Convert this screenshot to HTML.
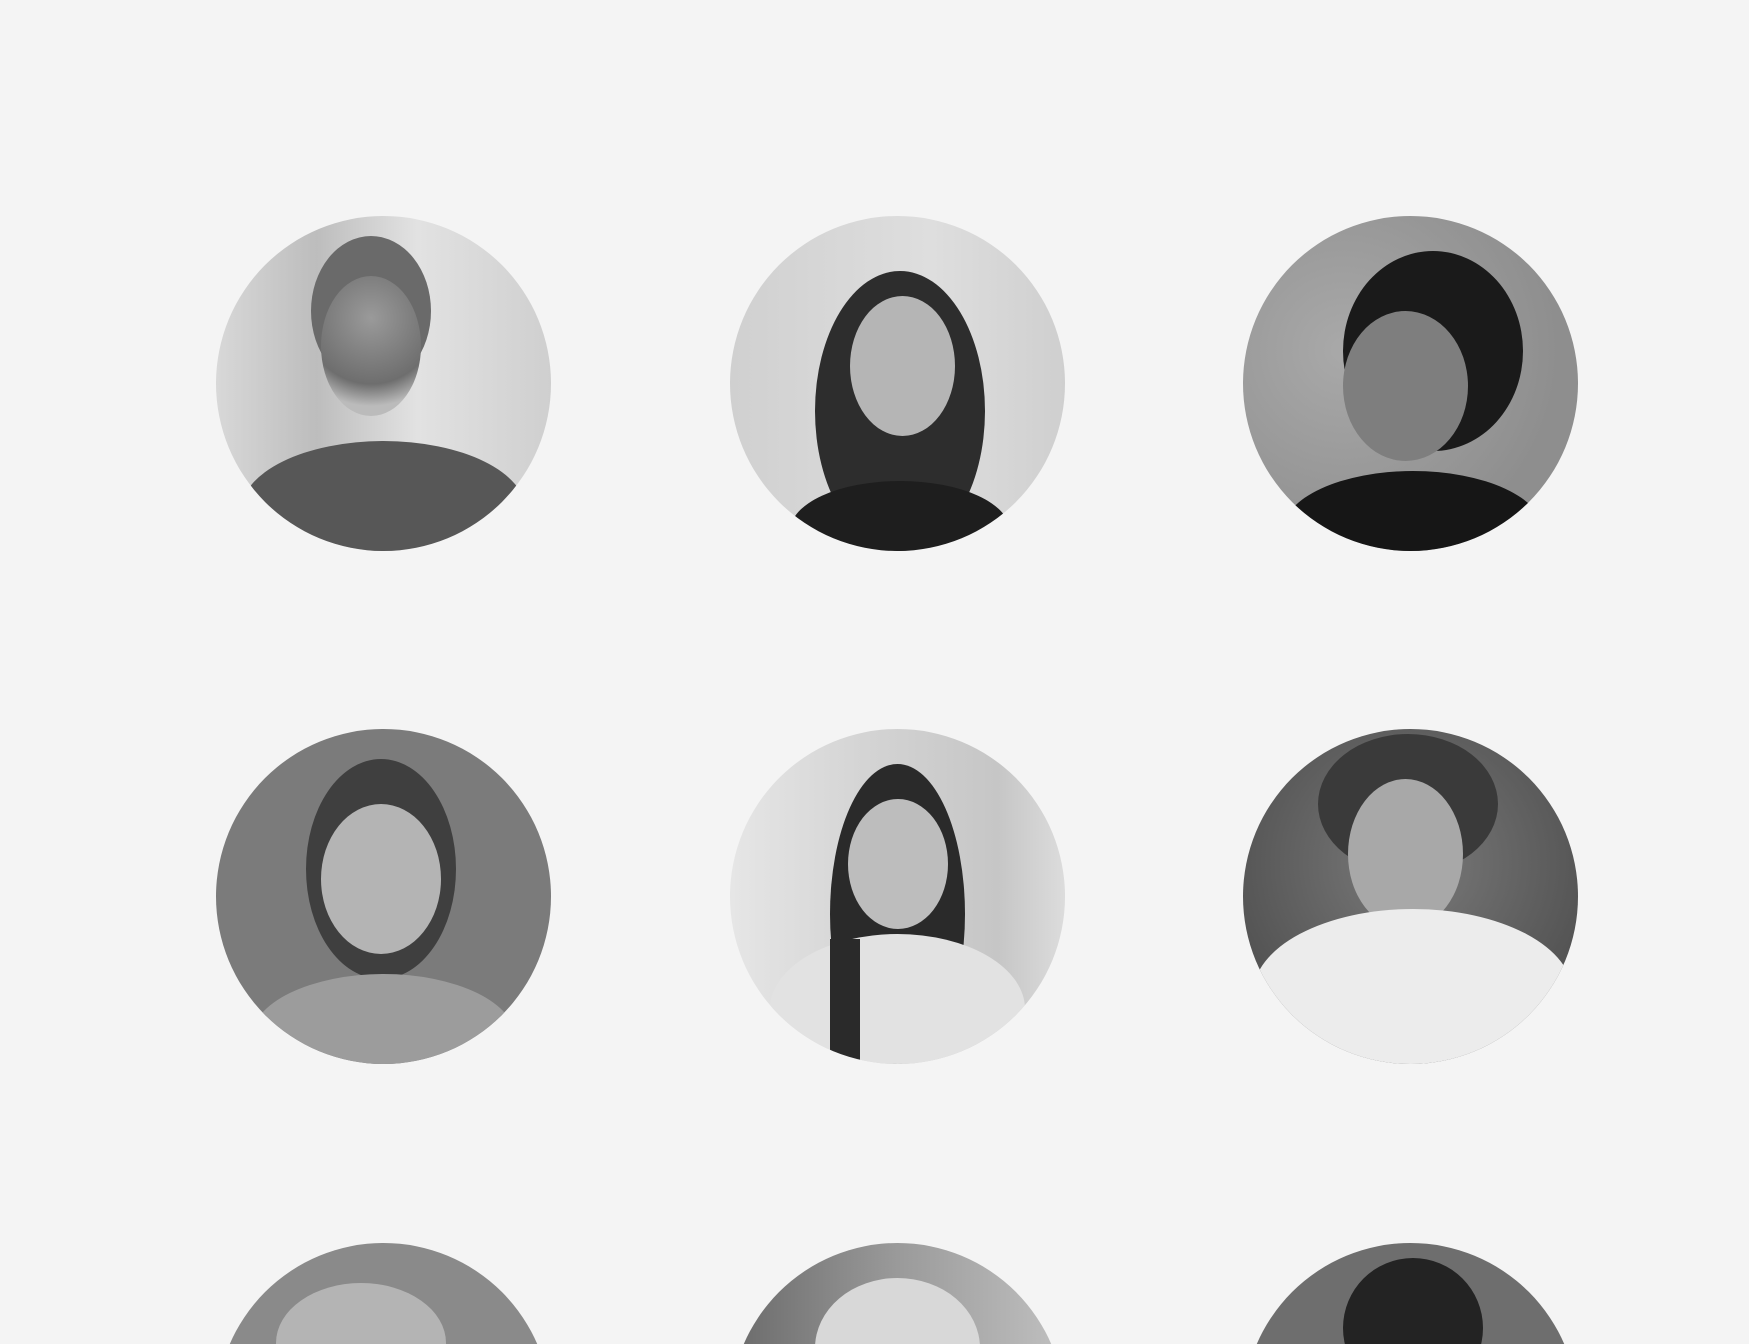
<!DOCTYPE html>
<html><head><meta charset="utf-8"><style>
html,body{margin:0;padding:0;background:#f4f4f4;font-family:"Liberation Sans",sans-serif;width:1749px;height:1344px;overflow:hidden}
#w{position:relative;width:1749px;height:1344px;overflow:hidden;background:#f4f4f4}
.c{position:absolute;width:335px;height:335px;border-radius:50%;overflow:hidden}
.h{position:absolute;border-radius:50%}
.s{position:absolute;border-radius:50% 50% 0 0}
</style></head><body><div id="w">

<div class="c" style="left:216px;top:216px;background:linear-gradient(90deg,#d8d8d8 0%,#bdbdbd 30%,#e2e2e2 60%,#cfcfcf 100%)">
  <div class="h" style="left:95px;top:20px;width:120px;height:150px;background:#6a6a6a"></div>
  <div class="h" style="left:105px;top:60px;width:100px;height:140px;background:radial-gradient(circle at 50% 30%,#9a9a9a,#6e6e6e 60%,#bbb 80%)"></div>
  <div class="s" style="left:25px;top:225px;width:285px;height:140px;background:#575757"></div>
</div>
<div class="c" style="left:730px;top:216px;background:linear-gradient(90deg,#d0d0d0,#dedede 60%,#cfcfcf)">
  <div class="h" style="left:85px;top:55px;width:170px;height:280px;background:#2d2d2d"></div>
  <div class="h" style="left:120px;top:80px;width:105px;height:140px;background:#b5b5b5"></div>
  <div class="s" style="left:60px;top:265px;width:220px;height:100px;background:#1e1e1e"></div>
</div>
<div class="c" style="left:1243px;top:216px;background:radial-gradient(circle at 30% 40%,#a9a9a9,#8e8e8e 70%)">
  <div class="h" style="left:100px;top:35px;width:180px;height:200px;background:#1a1a1a"></div>
  <div class="h" style="left:100px;top:95px;width:125px;height:150px;background:#7e7e7e"></div>
  <div class="s" style="left:40px;top:255px;width:260px;height:120px;background:#161616"></div>
</div>

<div class="c" style="left:216px;top:729px;background:#7b7b7b">
  <div class="h" style="left:90px;top:30px;width:150px;height:220px;background:#3f3f3f"></div>
  <div class="h" style="left:105px;top:75px;width:120px;height:150px;background:#b4b4b4"></div>
  <div class="s" style="left:35px;top:245px;width:265px;height:130px;background:#9c9c9c"></div>
</div>
<div class="c" style="left:730px;top:729px;background:linear-gradient(90deg,#e6e6e6,#d4d4d4 40%,#c6c6c6 80%,#dcdcdc)">
  <div class="h" style="left:100px;top:35px;width:135px;height:300px;background:#2a2a2a"></div>
  <div class="h" style="left:118px;top:70px;width:100px;height:130px;background:#bdbdbd"></div>
  <div class="s" style="left:40px;top:205px;width:255px;height:150px;background:#e2e2e2"></div>
  <div style="position:absolute;left:100px;top:210px;width:30px;height:125px;background:#2a2a2a"></div>
</div>
<div class="c" style="left:1243px;top:729px;background:radial-gradient(circle at 50% 40%,#7a7a7a,#4e4e4e 80%)">
  <div class="h" style="left:75px;top:5px;width:180px;height:140px;background:#3a3a3a"></div>
  <div class="h" style="left:105px;top:50px;width:115px;height:150px;background:#a8a8a8"></div>
  <div class="s" style="left:10px;top:180px;width:320px;height:170px;background:#ececec"></div>
</div>

<div class="c" style="left:216px;top:1243px;background:#8a8a8a">
  <div class="h" style="left:60px;top:40px;width:170px;height:120px;background:#b4b4b4"></div>
</div>
<div class="c" style="left:730px;top:1243px;background:linear-gradient(90deg,#6a6a6a,#9a9a9a 50%,#c0c0c0)">
  <div class="h" style="left:85px;top:35px;width:165px;height:140px;background:#d8d8d8"></div>
</div>
<div class="c" style="left:1243px;top:1243px;background:#6e6e6e">
  <div class="h" style="left:100px;top:15px;width:140px;height:140px;background:#232323"></div>
</div>

</div></body></html>
